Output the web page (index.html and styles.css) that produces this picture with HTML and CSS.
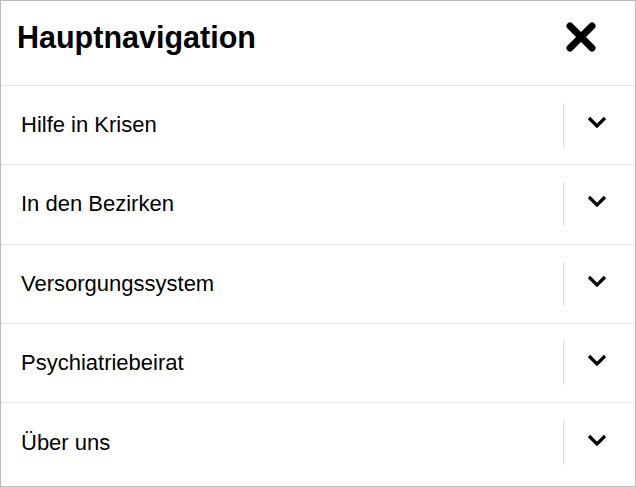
FILE: index.html
```html
<!DOCTYPE html>
<html lang="de">
<head>
    <meta charset="UTF-8">
    <meta name="viewport" content="width=device-width, initial-scale=1.0">
    <title>Hauptnavigation</title>
    <link rel="stylesheet" href="styles.css">
</head>
<body>

    <nav class="menu">
        <div class="menu-head">
            <h2 class="menu-title">Hauptnavigation</h2>
            <button class="close" aria-label="Menü schließen">
                <svg width="32" height="32" viewBox="0 0 32 32">
                    <path d="M5 5 L27 27 M27 5 L5 27" stroke="#000" stroke-width="7" stroke-linecap="round" fill="none"/>
                </svg>
            </button>
        </div>

        <ul class="menu-list">
            <li class="menu-item"><a href="#">Hilfe in Krisen</a><button class="toggle"><svg width="20" height="12" viewBox="0 0 20 12"><path d="M2 2 L10 10 L18 2" stroke="#000" stroke-width="3.2" fill="none"/></svg></button></li>
            <li class="menu-item"><a href="#">In den Bezirken</a><button class="toggle"><svg width="20" height="12" viewBox="0 0 20 12"><path d="M2 2 L10 10 L18 2" stroke="#000" stroke-width="3.2" fill="none"/></svg></button></li>
            <li class="menu-item"><a href="#">Versorgungssystem</a><button class="toggle"><svg width="20" height="12" viewBox="0 0 20 12"><path d="M2 2 L10 10 L18 2" stroke="#000" stroke-width="3.2" fill="none"/></svg></button></li>
            <li class="menu-item"><a href="#">Psychiatriebeirat</a><button class="toggle"><svg width="20" height="12" viewBox="0 0 20 12"><path d="M2 2 L10 10 L18 2" stroke="#000" stroke-width="3.2" fill="none"/></svg></button></li>
            <li class="menu-item"><a href="#">Über uns</a><button class="toggle"><svg width="20" height="12" viewBox="0 0 20 12"><path d="M2 2 L10 10 L18 2" stroke="#000" stroke-width="3.2" fill="none"/></svg></button></li>
        </ul>
    </nav>

</body>
</html>
```

FILE: styles.css
```css
body { margin: 0; font-family: "Liberation Sans", Arial, sans-serif; background-color: #fff; color: #000; }
.menu { width: 636px; height: 487px; box-sizing: border-box; border: 1px solid #bdbdbd; }
.menu-head { height: 85px; box-sizing: border-box; border-bottom: 1px solid #e5e5e5; display: flex; align-items: center; justify-content: space-between; padding: 0 38px 12px 16px; }
.menu-title { margin: 0; font-size: 30.5px; font-weight: bold; }
.close { background: none; border: none; padding: 0; cursor: pointer; display: flex; }
.menu-list { list-style: none; margin: 0; padding: 0; }
.menu-item { height: 79.25px; box-sizing: border-box; border-bottom: 1px solid #e6e6e6; display: flex; align-items: center; justify-content: space-between; padding-left: 20px; }
.menu-item:last-child { border-bottom: none; }
.menu-item a { color: #000; text-decoration: none; font-size: 22px; }
.toggle { width: 72px; height: 44px; box-sizing: border-box; background: none; border: none; border-left: 1px solid #dedede; padding: 0 6px 6px 0; cursor: pointer; display: flex; align-items: center; justify-content: center; }
```
